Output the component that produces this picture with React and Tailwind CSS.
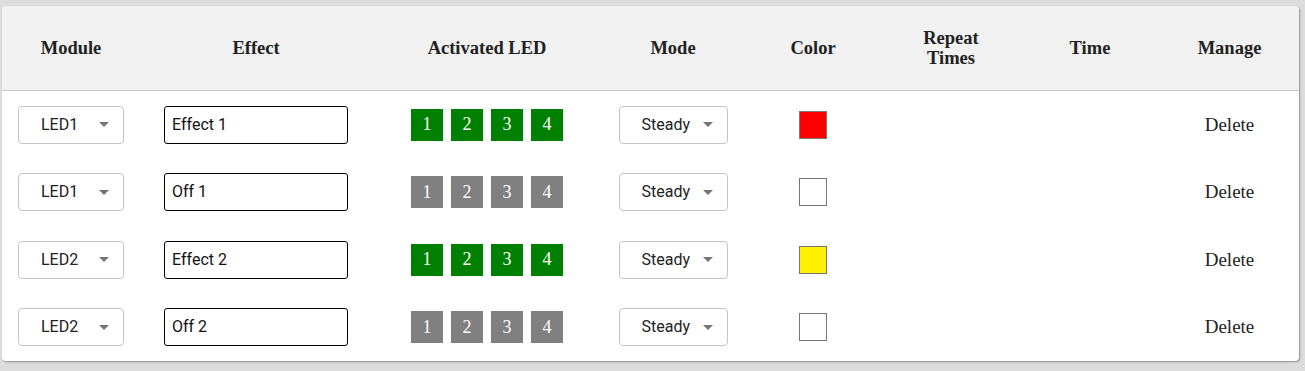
const rows = [
  { module: 'LED1', effect: 'Effect 1', on: true, color: 'bg-[#ff0000]' },
  { module: 'LED1', effect: 'Off 1', on: false, color: 'bg-white' },
  { module: 'LED2', effect: 'Effect 2', on: true, color: 'bg-[#fff000]' },
  { module: 'LED2', effect: 'Off 2', on: false, color: 'bg-white' },
];

const cols = [
  { label: 'Module', w: 'w-[138px]' },
  { label: 'Effect', w: 'w-[232px]' },
  { label: 'Activated LED', w: 'w-[230px]' },
  { label: 'Mode', w: 'w-[142px]' },
  { label: 'Color', w: 'w-[138px]' },
  { label: 'Repeat Times', w: 'w-[138px]', wrap: true },
  { label: 'Time', w: 'w-[140px]' },
  { label: 'Manage', w: 'w-[139px]' },
];

function Select({ value, width }) {
  return (
    <div className={`${width} h-[38px] flex items-center justify-between pl-[22px] pr-[14px] border border-[#c4c4c4] rounded-[4px] bg-white text-[16px] text-[#222] font-['Roboto',sans-serif]`}>
      <span>{value}</span>
      <span className="w-0 h-0 border-l-[5px] border-r-[5px] border-t-[5px] border-l-transparent border-r-transparent border-t-[#757575]" />
    </div>
  );
}

function LedBoxes({ on }) {
  return (
    <div className="flex gap-2">
      {[1, 2, 3, 4].map((n) => (
        <div
          key={n}
          className={`w-8 h-8 flex items-center justify-center text-white text-[18px] font-['Liberation_Serif',serif] ${on ? 'bg-[#008000]' : 'bg-[#808080]'}`}
        >
          {n}
        </div>
      ))}
    </div>
  );
}

export default function App() {
  return (
    <div className="w-[1305px] h-[371px] bg-[#dcdcdc] pt-[6px] pl-[2px]">
      <div className="w-[1297px] h-[355px] bg-white rounded-[4px] overflow-hidden shadow-[1px_1px_2px_rgba(0,0,0,0.35)]">
        {/* header */}
        <div className="flex h-[85px] bg-[#f1f1f1] border-b border-[#c8c8c8] font-['Liberation_Serif',serif] font-bold text-[18.5px] text-[#222]">
          {cols.map((c) => (
            <div key={c.label} className={`${c.w} flex items-center justify-center text-center leading-[20px]`}>
              {c.wrap ? <span className="w-[70px]">{c.label}</span> : c.label}
            </div>
          ))}
        </div>

        {rows.map((r, i) => (
          <div key={i} className="flex h-[67.5px] items-center">
            <div className="w-[138px] flex justify-center">
              <Select value={r.module} width="w-[106px]" />
            </div>
            <div className="w-[232px] flex justify-center">
              <div className="w-[184px] h-[38px] flex items-center px-[7px] border border-black rounded-[3px] text-[16px] text-[#111] font-['Roboto',sans-serif]">
                {r.effect}
              </div>
            </div>
            <div className="w-[230px] flex justify-center">
              <LedBoxes on={r.on} />
            </div>
            <div className="w-[142px] flex justify-center">
              <Select value="Steady" width="w-[109px]" />
            </div>
            <div className="w-[138px] flex justify-center">
              <div className={`w-[28px] h-[28px] border border-[#767676] ${r.color}`} />
            </div>
            <div className="w-[138px]" />
            <div className="w-[140px]" />
            <div className="w-[139px] flex justify-center text-[19px] text-[#222] font-['Liberation_Serif',serif]">
              Delete
            </div>
          </div>
        ))}
      </div>
    </div>
  );
}
